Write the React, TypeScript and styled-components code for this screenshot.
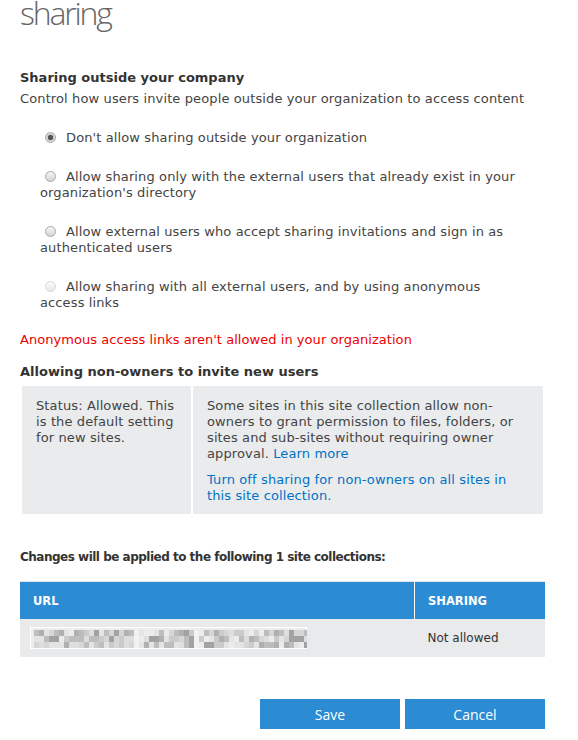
import React from 'react';
import styled, { createGlobalStyle } from 'styled-components';

const GlobalStyle = createGlobalStyle`
  html, body {
    margin: 0;
    padding: 0;
    background: #fff;
  }
  body {
    font-family: 'DejaVu Sans', Verdana, sans-serif;
    font-size: 13px;
    letter-spacing: 0.12px;
    color: #444;
    overflow: hidden;
  }
`;

const Page = styled.div`
  width: 525px;
  padding: 0 0 0 20px;
`;

const Title = styled.h1`
  margin: -7px 0 0;
  font-family: 'Open Sans', 'Segoe UI', sans-serif;
  font-weight: 300;
  font-size: 32px;
  letter-spacing: -2.2px;
  line-height: 40px;
  color: #666;
`;

const SectionTitle = styled.h2<{ top: number }>`
  margin: ${(p) => p.top}px 0 0;
  font-size: 13px;
  font-weight: bold;
  letter-spacing: 0;
  line-height: 16px;
  color: #333;
`;

const Text = styled.p`
  margin: 5px 0 0;
  line-height: 16px;
`;

const RadioList = styled.div`
  margin-top: 23px;
  padding: 0 25px 0 20px;
  display: flex;
  flex-direction: column;
  gap: 23px;
`;

const RadioOption = styled.label`
  display: block;
  line-height: 16px;
  color: #444;
`;

const RadioDot = styled.span<{ checked?: boolean; disabled?: boolean }>`
  display: inline-block;
  width: 11px;
  height: 11px;
  margin: 0 10px 0 5px;
  border-radius: 50%;
  box-sizing: border-box;
  vertical-align: -1px;
  border: 1px solid ${(p) => (p.disabled ? '#d8d8d8' : '#a8a8a8')};
  background: ${(p) =>
    p.checked
      ? 'radial-gradient(circle at 50% 50%, #555 0 2.4px, #ccc 3px, #f4f4f4 100%)'
      : p.disabled
        ? 'linear-gradient(#fbfbfb, #eaeaea)'
        : 'linear-gradient(#f6f6f6, #d4d4d4)'};
`;

const Warning = styled.p`
  margin: 21px 0 0;
  line-height: 16px;
  letter-spacing: 0.05px;
  color: #e00;
`;

const InfoBox = styled.div`
  margin: 6px 0 0 2px;
  width: 521px;
  display: grid;
  grid-template-columns: 169px 1fr;
  gap: 2px;
`;

const InfoCell = styled.div<{ wide?: boolean }>`
  background: #eaebed;
  height: 128px;
  box-sizing: border-box;
  padding: ${(p) => (p.wide ? '12px 20px 12px 14px' : '12px 5px 12px 14px')};
  line-height: 16px;
  color: #444;
  p {
    margin: 0;
  }
  p + p {
    margin-top: 10px;
  }
`;

const Link = styled.a`
  color: #0072c6;
  text-decoration: none;
`;

const TableTitle = styled(SectionTitle)`
  font-size: 12px;
  letter-spacing: -0.5px;
`;

const Table = styled.table`
  margin-top: 16px;
  width: 525px;
  border-collapse: collapse;
  border-top: 1px solid #e2e2e2;
  letter-spacing: 0;
`;

const HeadCell = styled.th<{ last?: boolean }>`
  background: #2b8bd3;
  color: #fff;
  text-align: left;
  font-size: 11.5px;
  font-weight: bold;
  height: 37px;
  padding: 0 13px;
  border-left: ${(p) => (p.last ? '1px solid #fff' : 'none')};
  width: ${(p) => (p.last ? '104px' : 'auto')};
`;

const BodyCell = styled.td`
  background: #e9eaec;
  height: 38px;
  padding: 0 10px 0 13px;
  font-size: 12px;
  color: #333;
`;

const Blurred = styled.svg`
  display: block;
  margin-left: -3px;
`;

const Actions = styled.div`
  margin-top: 42px;
  width: 525px;
  display: flex;
  justify-content: flex-end;
  gap: 5px;
`;

const Button = styled.button`
  width: 140px;
  height: 30px;
  border: 0;
  background: #2b8bd3;
  color: #fff;
  font-family: 'Open Sans', 'Segoe UI', sans-serif;
  font-size: 14px;
  cursor: pointer;
`;

const shades = ['#e4e4e4', '#d6d6d6', '#cbcbcb', '#bdbdbd', '#b0b0b0', '#a2a2a2', '#dedede', '#ececec'];

function mosaic() {
  const cells: { x: number; y: number; c: string }[] = [];
  let seed = 7;
  for (let row = 0; row < 3; row++) {
    for (let col = 0; col < 55; col++) {
      seed = (seed * 9301 + 49297) % 233280;
      const idx = Math.floor((seed / 233280) * shades.length);
      const gap = col === 20 || col === 32;
      cells.push({ x: 4 + col * 5, y: 2 + row * 6, c: gap ? '#f2f2f2' : shades[idx] });
    }
  }
  return cells;
}

const cells = mosaic();

export default function App() {
  return (
    <Page>
      <GlobalStyle />
      <Title>sharing</Title>
      <SectionTitle top={37}>Sharing outside your company</SectionTitle>
      <Text>Control how users invite people outside your organization to access content</Text>
      <RadioList>
        <RadioOption>
          <RadioDot checked />
          Don't allow sharing outside your organization
        </RadioOption>
        <RadioOption>
          <RadioDot />
          Allow sharing only with the external users that already exist in your organization's directory
        </RadioOption>
        <RadioOption>
          <RadioDot />
          Allow external users who accept sharing invitations and sign in as authenticated users
        </RadioOption>
        <RadioOption>
          <RadioDot disabled />
          Allow sharing with all external users, and by using anonymous access links
        </RadioOption>
      </RadioList>
      <Warning>Anonymous access links aren't allowed in your organization</Warning>
      <SectionTitle top={16}>Allowing non-owners to invite new users</SectionTitle>
      <InfoBox>
        <InfoCell>
          <p>Status: Allowed. This is the default setting for new sites.</p>
        </InfoCell>
        <InfoCell wide>
          <p>
            Some sites in this site collection allow non-owners to grant permission to files, folders, or
            sites and sub-sites without requiring owner approval. <Link href="#">Learn more</Link>
          </p>
          <p>
            <Link href="#">Turn off sharing for non-owners on all sites in this site collection.</Link>
          </p>
        </InfoCell>
      </InfoBox>
      <TableTitle top={35}>Changes will be applied to the following 1 site collections:</TableTitle>
      <Table>
        <thead>
          <tr>
            <HeadCell>URL</HeadCell>
            <HeadCell last>SHARING</HeadCell>
          </tr>
        </thead>
        <tbody>
          <tr>
            <BodyCell>
              <Blurred width="277" height="22" viewBox="0 0 277 22">
                <rect x="0.5" y="0.5" width="276" height="21" fill="#ececec" stroke="#fff" />
                {cells.map((c, i) => (
                  <rect key={i} x={c.x} y={c.y + 1} width="5" height="6" fill={c.c} />
                ))}
              </Blurred>
            </BodyCell>
            <BodyCell>Not allowed</BodyCell>
          </tr>
        </tbody>
      </Table>
      <Actions>
        <Button>Save</Button>
        <Button>Cancel</Button>
      </Actions>
    </Page>
  );
}
